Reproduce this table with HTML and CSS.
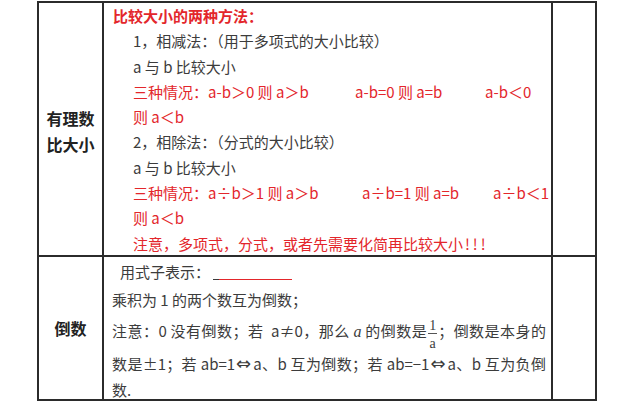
FILE: index.html
```html
<!DOCTYPE html>
<html lang="zh-CN">
<head>
<meta charset="utf-8">
<link rel="stylesheet" href="styles.css">
</head>
<body>
<div class="sheet">
  <div class="label label-r1"><span>有理数<br>比大小</span></div>
  <div class="body r1">
    <div class="ln title red">比较大小的两种方法：</div>
    <div class="ln sub">1，相减法：（用于多项式的大小比较）</div>
    <div class="ln sub">a 与 b 比较大小</div>
    <div class="ln sub red"><span class="seg s1a">三种情况：a-b＞0 则 a＞b</span><span class="seg s2a">a-b=0 则 a=b</span><span>a-b＜0</span></div>
    <div class="ln sub red">则 a＜b</div>
    <div class="ln sub">2，相除法：（分式的大小比较）</div>
    <div class="ln sub">a 与 b 比较大小</div>
    <div class="ln sub red"><span class="seg s1b">三种情况：a÷b＞1 则 a＞b</span><span class="seg s2b">a÷b=1 则 a=b</span><span>a÷b＜1</span></div>
    <div class="ln sub red">则 a＜b</div>
    <div class="ln sub red">注意，多项式，分式，或者先需要化简再比较大小<span class="bang">!!!</span></div>
  </div>
  <div class="blank"></div>

  <div class="label"><span>倒数</span></div>
  <div class="body r2">
    <div class="l2 l2a">用式子表示：<span class="blank-line"><span class="bl-k"></span><span class="bl-r"></span></span></div>
    <div class="l2 l2b">乘积为 1 的两个数互为倒数；</div>
    <div class="l2 l2c just">注意：0 没有倒数；若 &nbsp;a≠0，那么 <i class="it">a</i> 的倒数是<span class="frac"><span class="num">1</span><span class="den">a</span></span>；倒数是本身的</div>
    <div class="l2 l2d just">数是±1；若 ab=1<span class="arr">⇔</span>a、b 互为倒数；若 ab=−1<span class="arr">⇔</span>a、b 互为负倒</div>
    <div class="l2 l2e">数.</div>
  </div>
  <div class="blank"></div>
</div>
</body>
</html>
```
FILE: styles.css
```css
html, body {
  margin: 0;
  padding: 0;
  background: #ffffff;
}

body {
  font-family: "Noto Sans CJK SC", sans-serif;
  font-size: 15px;
  color: #3c3c3c;
}

.sheet {
  margin-left: 37px;
  margin-top: 1px;
  width: 560px;
  box-sizing: border-box;
  padding: 2px;
  background: #2b2b2b;
  display: grid;
  grid-template-columns: 63px 447px 42px;
  grid-template-rows: 252px 142px;
  gap: 2px;
}

.sheet > div {
  background: #ffffff;
}

.label {
  display: flex;
  align-items: center;
  justify-content: center;
  text-align: center;
  font-weight: 700;
  font-size: 16px;
  color: #222222;
  line-height: 26px;
}

.label-r1 span {
  padding-top: 3px;
}

.r1 {
  padding-left: 9px;
}

.ln {
  height: 25.3px;
  line-height: 25.3px;
  white-space: nowrap;
}

.title {
  font-weight: 700;
}

.sub {
  margin-left: 20px;
}

.red {
  color: #e3262b;
}

.bang {
  letter-spacing: 3px;
  margin-left: 2px;
}

.seg {
  display: inline-block;
}

.s1a { width: 222px; }
.s2a { width: 130px; }
.s1b { width: 229px; }
.s2b { width: 131px; }

.r2 {
  padding-top: 1px;
  padding-left: 8px;
  padding-right: 5px;
}

.l2 {
  white-space: nowrap;
}

.l2a {
  height: 28px;
  line-height: 28px;
  padding-left: 8px;
}

.l2b {
  height: 28px;
  line-height: 28px;
}

.l2c {
  height: 33px;
  line-height: 33px;
}

.l2d {
  height: 34px;
  line-height: 34px;
}

.l2e {
  height: 18px;
  line-height: 18px;
}

.just {
  white-space: normal;
  text-align: justify;
  text-align-last: justify;
}

.it {
  font-family: "Liberation Serif", serif;
  font-size: 16px;
}

.arr {
  font-family: "DejaVu Sans", sans-serif;
  font-size: 18px;
  line-height: 1;
  margin: 0 2px 0 1px;
}

.blank-line {
  display: inline-flex;
  vertical-align: baseline;
  margin-left: 3px;
  position: relative;
  top: 2px;
}

.bl-k {
  width: 6px;
  height: 1.5px;
  background: #3c3c3c;
}

.bl-r {
  width: 73px;
  height: 1.5px;
  background: #e3262b;
}

.frac {
  display: inline-flex;
  flex-direction: column;
  align-items: center;
  vertical-align: middle;
  font-family: "Liberation Serif", serif;
  font-size: 14px;
  line-height: 14px;
  margin: 0 1px;
  position: relative;
  top: 2px;
}

.num {
  border-bottom: 1px solid #555555;
  padding: 0 1px;
}

.den {
  padding-top: 3px;
}
```
